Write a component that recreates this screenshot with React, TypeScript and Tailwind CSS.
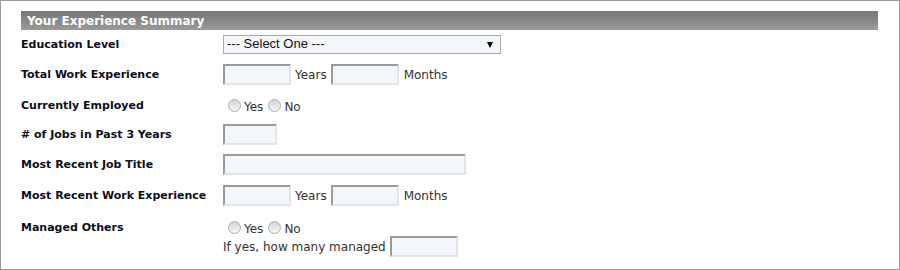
import React from "react";

const field =
  "h-[21px] border-2 border-t-[#9a9a9a] border-l-[#9a9a9a] border-b-[#e4e4e4] border-r-[#e4e4e4] bg-[#f3f6fa] outline-none";

function Radio({ label }: { label: string }) {
  return (
    <label className="flex items-center">
      <span className="w-[13px] h-[13px] rounded-full border border-[#b0b0b0] bg-gradient-to-b from-[#d4d4d4] to-[#f6f6f6] mr-[3px]" />
      <span className="mt-[3px]">{label}</span>
    </label>
  );
}

function Row({ label, h, children }: { label: string; h: string; children: React.ReactNode }) {
  return (
    <div className={`flex items-center ${h}`}>
      <div className="w-[222px] shrink-0 whitespace-nowrap pl-[20px] pt-[2px] font-bold text-[11px] text-[#0d0d1a]">{label}</div>
      <div className="flex items-center">{children}</div>
    </div>
  );
}

export default function App() {
  return (
    <div
      className="w-[900px] h-[270px] bg-white border border-[#9a9a9a] text-[12px] text-[#333] overflow-hidden"
      style={{ fontFamily: '"DejaVu Sans", Verdana, sans-serif' }}
    >
      {/* Section header */}
      <div className="mt-[10px] ml-[20px] mr-[21px] h-[19px] bg-gradient-to-b from-[#767676] to-[#9a9a9a] flex items-center pl-[6px]">
        <span className="text-white font-bold text-[12px] leading-none">Your Experience Summary</span>
      </div>

      <Row label="Education Level" h="h-[28px]">
        <div className="relative w-[278px] h-[19px] border border-[#a9a9a9] bg-[#f3f6fb] flex items-center pl-[3px]">
          <span className="text-[13px] text-[#111]" style={{ fontFamily: '"Liberation Sans", Arial, sans-serif' }}>
            --- Select One ---
          </span>
          <span className="absolute right-[7px] top-[6px] w-0 h-0 border-l-[3px] border-r-[3px] border-t-[6px] border-l-transparent border-r-transparent border-t-black" />
        </div>
      </Row>

      <Row label="Total Work Experience" h="h-[33px]">
        <input className={`${field} w-[68px]`} />
        <span className="mx-[4px]">Years</span>
        <input className={`${field} w-[68px]`} />
        <span className="ml-[5px]">Months</span>
      </Row>

      <Row label="Currently Employed" h="h-[28px]">
        <div className="flex items-center gap-[5px] pl-[5px]">
          <Radio label="Yes" />
          <Radio label="No" />
        </div>
      </Row>

      <Row label="# of Jobs in Past 3 Years" h="h-[30px]">
        <input className={`${field} w-[54px]`} />
      </Row>

      <Row label="Most Recent Job Title" h="h-[31px]">
        <input className={`${field} w-[243px]`} />
      </Row>

      <Row label="Most Recent Work Experience" h="h-[31px]">
        <input className={`${field} w-[68px]`} />
        <span className="mx-[4px]">Years</span>
        <input className={`${field} w-[68px]`} />
        <span className="ml-[5px]">Months</span>
      </Row>

      <div className="flex">
        <div className="w-[222px] shrink-0 whitespace-nowrap pl-[20px] pt-[9px] font-bold text-[11px] text-[#0d0d1a]">
          Managed Others
        </div>
        <div className="flex flex-col pt-[10px]">
          <div className="flex items-center gap-[5px] pl-[5px] h-[13px]">
            <Radio label="Yes" />
            <Radio label="No" />
          </div>
          <div className="flex items-center mt-[2px]">
            <span className="mr-[4px] mt-[1px]">If yes, how many managed</span>
            <input className={`${field} w-[68px]`} />
          </div>
        </div>
      </div>
    </div>
  );
}
